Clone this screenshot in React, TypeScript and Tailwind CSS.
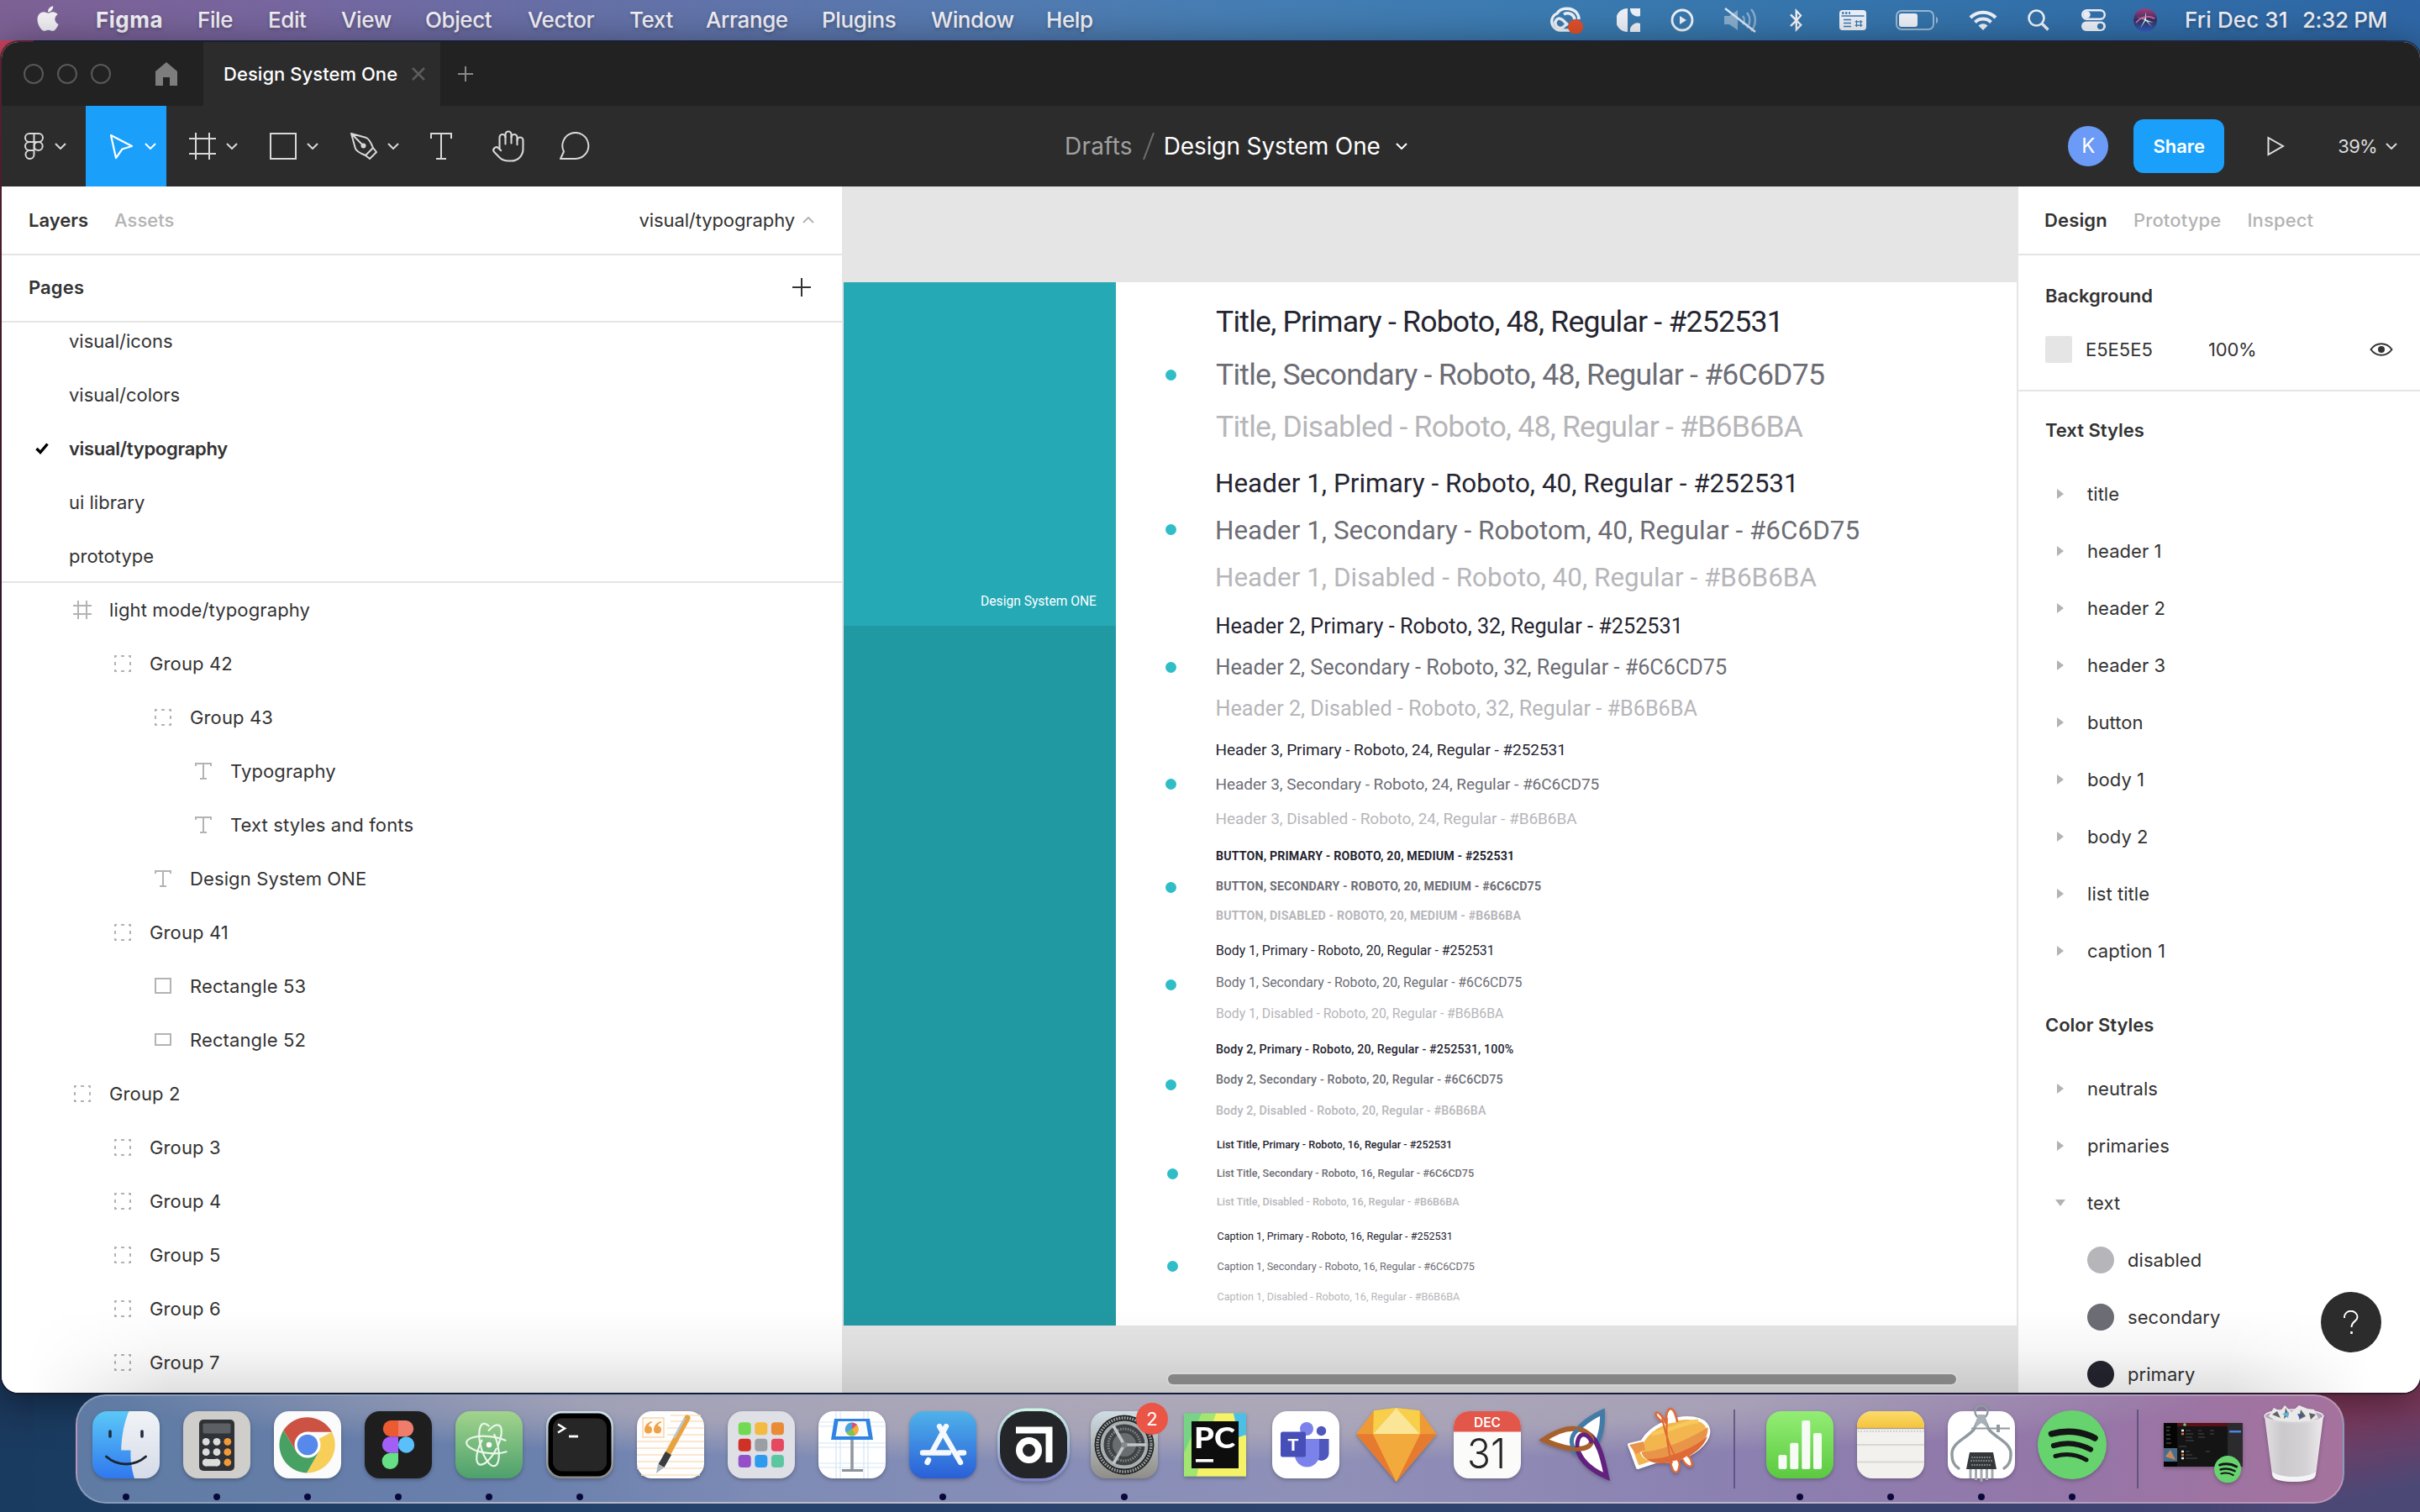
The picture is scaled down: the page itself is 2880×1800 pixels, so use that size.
import type { ReactNode } from "react";
import { FaApple, FaBluetoothB } from "react-icons/fa";
import { Hand } from "lucide-react";

/* ---------- menu bar ---------- */

const menus: [string, string][] = [
  ["File", "w-[84px]"],
  ["Edit", "w-[87px]"],
  ["View", "w-[100px]"],
  ["Object", "w-[122px]"],
  ["Vector", "w-[121px]"],
  ["Text", "w-[91px]"],
  ["Arrange", "w-[138px]"],
  ["Plugins", "w-[130px]"],
  ["Window", "w-[137px]"],
  ["Help", "w-[80px]"],
];

function MenuBar() {
  return (
    <div className="relative flex h-12 shrink-0 items-center bg-[linear-gradient(90deg,#7d6195_0%,#7767a0_12%,#686fa6_22%,#5a78ae_36%,#477eb4_50%,#3b7bb1_64%,#3473ab_80%,#2f67a6_100%)] text-[26px] font-medium leading-none tracking-[-0.4px] text-[#f3f1f6] [text-shadow:0_2px_4px_rgba(0,0,0,0.25)]">
      <FaApple className="ml-[42px] -mt-1 h-[34px] w-[30px]" />
      <span className="ml-[42px] w-[121px] font-bold tracking-[0.5px]">Figma</span>
      {menus.map(([m, w]) => (
        <span key={m} className={w}>
          {m}
        </span>
      ))}
      <div className="ml-auto mr-[41px] flex items-center">
        <svg className="h-8 w-10" viewBox="0 0 40 32" fill="none" stroke="#eef2f8" strokeWidth="3.5">
          <path d="M27 28H12A10.500 10.500 0 0 1 9 8C12 3 18 1.500 24 2.500C31 4 35 9 35 15" />
          <path d="M20 21L16 24.500A6 6 0 0 1 8 16C10 13 13 13.500 16 16L22 22M17 9C23 6 29 9 30 15" />
          <circle cx="31" cy="24" r="9" fill="#e2502a" stroke="none" />
        </svg>
        <svg className="ml-10 h-7 w-7" viewBox="0 0 28 28" fill="#eef2f8">
          <path d="M13 0V28A14 14 0 0 1 13 0ZM16 0H28V9A9 9 0 0 1 16 0ZM16 28A9 9 0 0 1 28 18V28Z" />
        </svg>
        <svg className="ml-9 h-7 w-7" viewBox="0 0 28 28" fill="none" stroke="#eef2f8" strokeWidth="2.800">
          <circle cx="14" cy="14" r="12" />
          <path d="M11 9L19 14L11 19Z" fill="#eef2f8" stroke="none" />
        </svg>
        <svg className="ml-[35px] h-8 w-10" viewBox="0 0 40 32" fill="none">
          <g opacity="0.4">
            <path d="M1 11H7L17 4V28L7 21H1Z" fill="#fff" />
            <path d="M23 11A8 8 0 0 1 23 21M28 7A14 14 0 0 1 28 25M33 3A20 20 0 0 1 33 29" stroke="#fff" strokeWidth="2.500" />
          </g>
          <path d="M2 2L38 30" stroke="#dfe8f3" strokeWidth="2.500" />
        </svg>
        <FaBluetoothB className="ml-[36px] h-7 w-[21px]" />
        <svg className="ml-[41px] h-6 w-8" viewBox="0 0 32 24">
          <rect x="0" y="0" width="32" height="24" rx="4" fill="#eef2f8" />
          <path d="M3 3.500H13" stroke="#3a78af" strokeWidth="2.500" strokeDasharray="2.500 1.500" />
          <path d="M2.500 7H29.500M5 11.500H14M5 15.500H14M5 19.500H14" stroke="#3a78af" strokeWidth="1.500" />
          <path d="M20.500 12V20M25.500 12V20M18.500 13.800H27.500M18.500 18.200H27.500" stroke="#3a78af" strokeWidth="1.200" />
        </svg>
        <svg className="ml-[35px] h-6 w-[51px]" viewBox="0 0 51 24">
          <rect x="1" y="1" width="44" height="22" rx="6" fill="none" stroke="#fff" strokeOpacity="0.5" strokeWidth="2" />
          <rect x="4" y="4" width="22" height="16" rx="3" fill="#eef2f8" />
          <path d="M48 8C51 9 51 15 48 16Z" fill="#fff" fillOpacity="0.5" />
        </svg>
        <svg className="ml-9 h-6 w-[34px]" viewBox="0 0 34 24" fill="none" stroke="#eef2f8" strokeWidth="4">
          <path d="M2 9A21 21 0 0 1 32 9M7.500 14.500A13.500 13.500 0 0 1 26.500 14.500" />
          <path d="M17 24L11.500 18.500A8 8 0 0 1 22.500 18.500Z" fill="#eef2f8" stroke="none" />
        </svg>
        <svg className="ml-9 h-[26px] w-[26px]" viewBox="0 0 26 26" fill="none" stroke="#eef2f8" strokeWidth="2.600">
          <circle cx="10.500" cy="10.500" r="9" />
          <path d="M17 17L24.500 24.500" strokeWidth="3.400" />
        </svg>
        <svg className="ml-[38px] h-[26px] w-[29px]" viewBox="0 0 29 26">
          <rect x="1.200" y="1.200" width="26.600" height="10.500" rx="5.250" fill="none" stroke="#eef2f8" strokeWidth="2.400" />
          <circle cx="6.500" cy="6.500" r="4.200" fill="#eef2f8" />
          <rect x="0" y="14.500" width="29" height="11.500" rx="5.750" fill="#eef2f8" />
          <circle cx="22.500" cy="20.300" r="3.600" fill="#3671aa" />
        </svg>
        <svg className="ml-[33px] h-7 w-7" viewBox="0 0 28 28">
          <defs>
            <linearGradient id="siri" x1="0" y1="0" x2="0" y2="1">
              <stop offset="0" stopColor="#a83e7e" />
              <stop offset="0.5" stopColor="#34305f" />
              <stop offset="1" stopColor="#3163c4" />
            </linearGradient>
          </defs>
          <circle cx="14" cy="14" r="14" fill="url(#siri)" />
          <path d="M4 10L14 13L24 17L14 15L8 24L13 14L15 4L15 13L22 22L14 14Z" fill="#d9fff4" />
          <path d="M3 17C9 10 17 8 25 12" stroke="#e76aa8" strokeWidth="1.500" fill="none" />
        </svg>
        <span className="ml-[33px] w-[140px] tracking-[0.1px]">Fri Dec 31</span>
        <span className="w-[99px] whitespace-nowrap">2:32 PM</span>
      </div>
    </div>
  );
}

/* ---------- window chrome ---------- */

function Chevron({ up, color = "#d8d8d8" }: { up?: boolean; color?: string }) {
  return (
    <svg className="h-2 w-[14px] shrink-0" viewBox="0 0 14 8" fill="none" stroke={color} strokeWidth="2">
      <path d={up ? "M1 7L7 1L13 7" : "M1 1L7 7L13 1"} />
    </svg>
  );
}

function TabBar() {
  return (
    <div className="flex h-[76px] shrink-0 items-center bg-[#222222]">
      <div className="ml-[26px] flex gap-4">
        <i className="size-6 rounded-full border-2 border-[#585858]" />
        <i className="size-6 rounded-full border-2 border-[#585858]" />
        <i className="size-6 rounded-full border-2 border-[#585858]" />
      </div>
      <svg className="ml-[53px] h-7 w-[26px]" viewBox="0 0 26 28" fill="#7d7d7d">
        <path d="M13 0L26 11V28H17V18H9V28H0V11Z" />
      </svg>
      <div className="ml-[31px] flex h-full w-[282px] items-center bg-[#2c2c2c] pl-6">
        <span className="text-[22px] font-medium tracking-[0.05px] text-white">Design System One</span>
        <svg className="ml-[17px] size-4" viewBox="0 0 16 16" stroke="#5c5c5c" strokeWidth="2.500">
          <path d="M1 1L15 15M15 1L1 15" />
        </svg>
      </div>
      <svg className="ml-[21px] size-[18px]" viewBox="0 0 18 18" stroke="#8a8a8a" strokeWidth="2">
        <path d="M9 0V18M0 9H18" />
      </svg>
    </div>
  );
}

function Tool({ children, active }: { children: ReactNode; active?: boolean }) {
  return (
    <div className={active ? "flex h-full w-24 items-center bg-[#1aa0fb] pl-[28px]" : "flex h-full w-24 items-center pl-[27px]"}>
      {children}
      <span className="ml-3">
        <Chevron color={active ? "#ffffff" : "#d8d8d8"} />
      </span>
    </div>
  );
}

function Toolbar() {
  return (
    <div className="flex h-24 shrink-0 items-center bg-[#2c2c2c] text-[28px] leading-none">
      <div className="flex h-full w-[1265px] items-center">
        <div className="flex h-full w-[100px] items-center pl-[27px]">
          <svg className="h-8 w-[23px]" viewBox="0 0 23 32" fill="none" stroke="#d8d8d8" strokeWidth="2">
            <path d="M11.500 1H6A5 5 0 0 0 6 11H11.500ZM11.500 1H17A5 5 0 0 1 17 11H11.500ZM11.500 11H6A5 5 0 0 0 6 21H11.500ZM11.500 21H6A5 5 0 1 0 11.500 26Z" />
            <circle cx="16.700" cy="16" r="5" />
          </svg>
          <span className="ml-[13px]">
            <Chevron />
          </span>
        </div>
        <Tool active>
          <svg className="h-8 w-[30px]" viewBox="0 0 30 32" fill="none" stroke="#fff" strokeWidth="2.200" strokeLinejoin="round">
            <path d="M2 3L27 16L15.500 19.500L8 30Z" />
          </svg>
        </Tool>
        <Tool>
          <svg className="size-8" viewBox="0 0 32 32" stroke="#d8d8d8" strokeWidth="2">
            <path d="M8 0V32M24 0V32M0 7H32M0 25H32" />
          </svg>
        </Tool>
        <Tool>
          <svg className="size-8" viewBox="0 0 32 32" fill="none" stroke="#d8d8d8" strokeWidth="2">
            <rect x="1" y="1" width="30" height="30" />
          </svg>
        </Tool>
        <Tool>
          <svg className="size-8" viewBox="0 0 32 32" fill="none" stroke="#d8d8d8" strokeWidth="2" strokeLinejoin="round">
            <path d="M1 1L19 6C24 9 25 14 27 18L18 27C14 25 9 24 6 19ZM1 1L14 14M27 18L31 23L23 31L18 27" />
            <circle cx="15.500" cy="15.500" r="3" fill="#d8d8d8" stroke="none" />
          </svg>
        </Tool>
        <svg className="ml-[26px] h-8 w-[26px]" viewBox="0 0 26 32" fill="none" stroke="#d8d8d8" strokeWidth="2">
          <path d="M1 7V1H25V7M13 1V31M7 31H19" />
        </svg>
        <Hand className="ml-[46px] size-[42px] text-[#d8d8d8]" strokeWidth={1.2} />
        <svg className="ml-[39px] h-[34px] w-[37px]" viewBox="0 0 37 34" fill="none" stroke="#d8d8d8" strokeWidth="2" strokeLinejoin="round">
          <path d="M20 32A15.500 15.500 0 1 0 6 23.500L2 32Z" />
        </svg>
      </div>
      <span className="tracking-[0.2px] text-[#a0a0a0]">Drafts</span>
      <svg className="ml-[12px] h-8 w-[14px]" viewBox="0 0 14 32" stroke="#6e6e6e" strokeWidth="2">
        <path d="M13 0L1 32" />
      </svg>
      <span className="ml-[11px] tracking-[-0.120px] text-white">Design System One</span>
      <span className="ml-[18px]">
        <Chevron color="#fff" />
      </span>
      <div className="ml-auto flex items-center">
        <span className="flex size-12 items-center justify-center rounded-full bg-[#6b9bf7] text-[24px] text-white">K</span>
        <span className="ml-[30px] flex h-16 w-[108px] items-center justify-center rounded-xl bg-[#1aa0fb] text-[22px] font-semibold text-white">
          Share
        </span>
        <svg className="ml-[51px] h-6 w-[21px]" viewBox="0 0 21 24" fill="none" stroke="#e0e0e0" strokeWidth="2">
          <path d="M1.500 2L19 12L1.500 22Z" />
        </svg>
        <span className="ml-[63px] text-[22px] tracking-[-0.700px] text-[#dcdcdc]">39%</span>
        <span className="ml-[10px] mr-[27px]">
          <Chevron />
        </span>
      </div>
    </div>
  );
}

/* ---------- left panel ---------- */

type LayerKind = "frame" | "group" | "text" | "square" | "wide";

function LayerIcon({ kind }: { kind: LayerKind }) {
  return (
    <svg className="size-6 shrink-0" viewBox="0 0 24 24" fill="none" stroke="#b3b3b3" strokeWidth="2">
      {kind === "frame" && <path d="M7 1V23M17 1V23M1 7H23M1 17H23" />}
      {kind === "group" && (
        <path d="M3 5V3H5M19 3H21V5M21 19V21H19M5 21H3V19M10 3H14M10 21H14M3 10V14M21 10V14" />
      )}
      {kind === "text" && <path d="M3 6V3H21V6M12 3V21M8 21H16" />}
      {kind === "square" && <rect x="3" y="3" width="18" height="17" />}
      {kind === "wide" && <rect x="3" y="5" width="18" height="13" />}
    </svg>
  );
}

const layers: [string, LayerKind, string][] = [
  ["light mode/typography", "frame", "pl-[84px]"],
  ["Group 42", "group", "pl-[132px]"],
  ["Group 43", "group", "pl-[180px]"],
  ["Typography", "text", "pl-[228px]"],
  ["Text styles and fonts", "text", "pl-[228px]"],
  ["Design System ONE", "text", "pl-[180px]"],
  ["Group 41", "group", "pl-[132px]"],
  ["Rectangle 53", "square", "pl-[180px]"],
  ["Rectangle 52", "wide", "pl-[180px]"],
  ["Group 2", "group", "pl-[84px]"],
  ["Group 3", "group", "pl-[132px]"],
  ["Group 4", "group", "pl-[132px]"],
  ["Group 5", "group", "pl-[132px]"],
  ["Group 6", "group", "pl-[132px]"],
  ["Group 7", "group", "pl-[132px]"],
];

const pages = ["visual/icons", "visual/colors", "visual/typography", "ui library", "prototype"];

function LeftPanel() {
  return (
    <aside className="flex w-[1002px] shrink-0 flex-col border-r-2 border-[#e5e5e5] bg-white text-[22px] leading-none tracking-[0.120px] text-[#333333]">
      <div className="flex h-[82px] shrink-0 items-center border-b-2 border-[#e5e5e5] pl-8 pr-[33px]">
        <span className="font-semibold tracking-normal">Layers</span>
        <span className="ml-[31px] font-medium tracking-normal text-[#b3b3b3]">Assets</span>
        <span className="ml-auto mr-[9px] tracking-[-0.1px]">visual/typography</span>
        <Chevron up color="#b3b3b3" />
      </div>
      <div className="flex h-20 shrink-0 items-center justify-between border-b-2 border-[#e5e5e5] pb-[2px] pl-8 pr-[37px]">
        <span className="font-semibold">Pages</span>
        <svg className="size-[22px]" viewBox="0 0 22 22" stroke="#333" strokeWidth="2">
          <path d="M11 0V22M0 11H22" />
        </svg>
      </div>
      <div className="h-[310px] shrink-0 overflow-hidden border-b-2 border-[#e5e5e5]">
        <ul className="-mt-[10px]">
          {pages.map((p) => (
            <li key={p} className="flex h-16 items-center pl-10">
              <span className="w-10">
                {p === "visual/typography" && (
                  <svg className="h-[14px] w-4" viewBox="0 0 16 14" fill="none" stroke="#000" strokeWidth="3.400">
                    <path d="M1.500 7L6 11.500L14.500 1.500" />
                  </svg>
                )}
              </span>
              <span className={p === "visual/typography" ? "font-semibold tracking-[-0.3px]" : "tracking-normal"}>{p}</span>
            </li>
          ))}
        </ul>
      </div>
      <ul>
        {layers.map(([name, kind, pad]) => (
          <li key={name} className="flex h-16 items-center">
            <div className={pad}>
              <div className="flex items-center gap-5">
                <LayerIcon kind={kind} />
                <span>{name}</span>
              </div>
            </div>
          </li>
        ))}
      </ul>
    </aside>
  );
}

/* ---------- canvas ---------- */

const PRIMARY = "text-[#252531]";
const SECONDARY = "text-[#6c6d75]";
const DISABLED = "text-[#b6b6ba]";

interface Sample {
  style: string;
  size: number;
  x: number;
  baselines: number[];
  dot: number;
  lines: string[];
}

/* Coordinates are measured from the artboard's top-left corner. */
const samples: Sample[] = [
  { style: "text-[35.600px] tracking-[-0.780px]", size: 35.6, x: 443, baselines: [59, 121.7, 184.5], dot: 110.5, lines: ["Title, Primary - Roboto, 48, Regular - #252531", "Title, Secondary - Roboto, 48, Regular - #6C6D75", "Title, Disabled - Roboto, 48, Regular - #B6B6BA"] },
  { style: "text-[31.400px] tracking-[0.040px]", size: 31.4, x: 442, baselines: [250.8, 306.5, 362.3], dot: 294.5, lines: ["Header 1, Primary - Roboto, 40, Regular - #252531", "Header 1, Secondary - Robotom, 40, Regular - #6C6D75", "Header 1, Disabled - Roboto, 40, Regular - #B6B6BA"] },
  { style: "text-[25.200px] tracking-[0.010px]", size: 25.2, x: 442.5, baselines: [419, 468, 516.8], dot: 458.3, lines: ["Header 2, Primary - Roboto, 32, Regular - #252531", "Header 2, Secondary - Roboto, 32, Regular - #6C6CD75", "Header 2, Disabled - Roboto, 32, Regular - #B6B6BA"] },
  { style: "text-[19px] tracking-[-0.040px]", size: 19, x: 442.5, baselines: [563.5, 604.7, 645.3], dot: 597.5, lines: ["Header 3, Primary - Roboto, 24, Regular - #252531", "Header 3, Secondary - Roboto, 24, Regular - #6C6CD75", "Header 3, Disabled - Roboto, 24, Regular - #B6B6BA"] },
  { style: "text-[14.200px] font-bold tracking-[0.160px]", size: 14.2, x: 443, baselines: [688.3, 723.8, 759.2], dot: 720.5, lines: ["BUTTON, PRIMARY - ROBOTO, 20, MEDIUM - #252531", "BUTTON, SECONDARY - ROBOTO, 20, MEDIUM - #6C6CD75", "BUTTON, DISABLED - ROBOTO, 20, MEDIUM - #B6B6BA"] },
  { style: "text-[15.800px] tracking-[-0.030px]", size: 15.8, x: 443, baselines: [801.8, 839, 876.2], dot: 836, lines: ["Body 1, Primary - Roboto, 20, Regular - #252531", "Body 1, Secondary - Roboto, 20, Regular - #6C6CD75", "Body 1, Disabled - Roboto, 20, Regular - #B6B6BA"] },
  { style: "text-[14.200px] font-medium tracking-[0.160px]", size: 14.2, x: 443, baselines: [918.3, 954.2, 990.4], dot: 955.5, lines: ["Body 2, Primary - Roboto, 20, Regular - #252531, 100%", "Body 2, Secondary - Roboto, 20, Regular - #6C6CD75", "Body 2, Disabled - Roboto, 20, Regular - #B6B6BA"] },
  { style: "text-[12.600px] font-medium", size: 12.6, x: 444, baselines: [1031.3, 1065, 1099.3], dot: 1061.5, lines: ["List Title, Primary - Roboto, 16, Regular - #252531", "List Title, Secondary - Roboto, 16, Regular - #6C6CD75", "List Title, Disabled - Roboto, 16, Regular - #B6B6BA"] },
  { style: "text-[12.600px] tracking-[-0.010px]", size: 12.6, x: 444.5, baselines: [1140, 1176, 1212.2], dot: 1171.8, lines: ["Caption 1, Primary - Roboto, 16, Regular - #252531", "Caption 1, Secondary - Roboto, 16, Regular - #6C6CD75", "Caption 1, Disabled - Roboto, 16, Regular - #B6B6BA"] },
];

const tones = [PRIMARY, SECONDARY, DISABLED];

function Canvas() {
  return (
    <main className="relative min-w-0 flex-1 overflow-hidden bg-[#e5e5e5] font-['Roboto',sans-serif]">
      <div className="absolute left-0 top-[114px] h-[1242px] w-full bg-white">
        <div className="flex h-full w-[324px] flex-col">
          <div className="flex h-[409px] items-end justify-end bg-[#25a9b5] pb-5 pr-[23px] text-[15.600px] leading-none text-white">
            Design System ONE
          </div>
          <div className="flex-1 bg-[#2199a3]" />
        </div>
        {samples.map((s) => (
          <div key={s.lines[0]}>
            <i
              className="absolute size-[13px] rounded-full bg-[#2fbdc7]"
              style={{ top: s.dot - 6.5, left: s.x >= 444 ? 384.5 : 382.5 }}
            />
            {s.lines.map((line, i) => (
              <p
                key={line}
                className={`absolute whitespace-nowrap leading-[40px] ${s.style} ${tones[i]}`}
                style={{ left: s.x, top: s.baselines[i] - 20 - 0.342 * s.size }}
              >
                {line}
              </p>
            ))}
          </div>
        ))}
      </div>
      <div className="absolute bottom-[10px] left-[386px] h-3 w-[938px] rounded-full bg-[#939393] shadow-[0_0_0_2px_rgba(255,255,255,0.3)]" />
    </main>
  );
}

/* ---------- right panel ---------- */

const textStyles = ["title", "header 1", "header 2", "header 3", "button", "body 1", "body 2", "list title", "caption 1"];

function StyleRow({ name, open }: { name: string; open?: boolean }) {
  return (
    <li className="flex h-[68px] items-center pl-[44px]">
      <span className="flex w-[38px]">
        {open ? (
          <svg className="h-2 w-3" viewBox="0 0 12 8" fill="#b3b3b3">
            <path d="M0 0H12L6 8Z" />
          </svg>
        ) : (
          <svg className="ml-[2px] h-3 w-2" viewBox="0 0 8 12" fill="#b3b3b3">
            <path d="M0 0V12L8 6Z" />
          </svg>
        )}
      </span>
      {name}
    </li>
  );
}

function ColorRow({ name, swatch }: { name: string; swatch: string }) {
  return (
    <li className="flex h-[68px] items-center gap-4 pl-[82px]">
      <i className={`size-8 rounded-full ${swatch}`} />
      {name}
    </li>
  );
}

function RightPanel() {
  return (
    <aside className="flex w-[480px] shrink-0 flex-col overflow-hidden border-l-2 border-[#e5e5e5] bg-white text-[22px] leading-none tracking-[0.050px] text-[#333333]">
      <div className="flex h-[82px] shrink-0 items-center border-b-2 border-[#e5e5e5] pl-[31px] font-medium tracking-[0.150px] text-[#b3b3b3]">
        <span className="font-semibold text-[#333333]">Design</span>
        <span className="ml-[31px]">Prototype</span>
        <span className="ml-[31px]">Inspect</span>
      </div>
      <div className="flex h-[162px] shrink-0 flex-col border-b-2 border-[#e5e5e5] pl-8 pr-[32px]">
        <h3 className="flex h-24 items-center font-semibold tracking-normal">Background</h3>
        <div className="flex h-8 items-center">
          <i className="size-8 rounded-[2px] bg-[#e5e5e5]" />
          <span className="ml-4 w-[146px] tracking-normal">E5E5E5</span>
          <span className="tracking-[-0.200px]">100%</span>
          <svg className="ml-auto h-4 w-[28px]" viewBox="0 0 28 16" fill="none" stroke="#333" strokeWidth="2">
            <path d="M1.500 8C8 -1 20 -1 26.500 8C20 17 8 17 1.500 8Z" />
            <circle cx="14" cy="8" r="4" fill="#333" stroke="none" />
          </svg>
        </div>
      </div>
      <h3 className="flex h-[88px] shrink-0 items-center pl-8 pt-[4px] font-semibold tracking-normal">Text Styles</h3>
      <ul>
        {textStyles.map((s) => (
          <StyleRow key={s} name={s} />
        ))}
      </ul>
      <h3 className="flex h-[96px] shrink-0 items-center pl-8 pt-[12px] font-semibold tracking-normal">Color Styles</h3>
      <ul>
        <StyleRow name="neutrals" />
        <StyleRow name="primaries" />
        <StyleRow name="text" open />
        <ColorRow name="disabled" swatch="bg-[#b6b6ba]" />
        <ColorRow name="secondary" swatch="bg-[#6c6d75]" />
        <ColorRow name="primary" swatch="bg-[#252531]" />
      </ul>
    </aside>
  );
}

/* ---------- dock ---------- */

function App80({ children, dot, badge }: { children: ReactNode; dot?: boolean; badge?: string }) {
  return (
    <div className="relative flex w-[108px] flex-col items-center pt-[18px]">
      <svg className="size-20 overflow-visible drop-shadow-[0_2px_2px_rgba(0,0,0,0.25)]" viewBox="0 0 80 80">
        {children}
      </svg>
      {dot && <i className="mt-[18px] size-2 rounded-full bg-[#0a0838]" />}
      {badge && (
        <span className="absolute right-[2px] top-2 flex size-[38px] items-center justify-center rounded-full bg-[#ea5545] text-[22px] leading-none text-white">
          {badge}
        </span>
      )}
    </div>
  );
}

function Tile({ fill }: { fill: string }) {
  return <rect width="80" height="80" rx="18" fill={fill} />;
}

function Grad({ id, stops }: { id: string; stops: string[] }) {
  return (
    <linearGradient id={id} x1="0" y1="0" x2="0" y2="1">
      {stops.map((c, i) => (
        <stop key={i} offset={i / (stops.length - 1)} stopColor={c} />
      ))}
    </linearGradient>
  );
}

function SpotifyArcs() {
  return (
    <g fill="none" stroke="#131614" strokeLinecap="round">
      <path d="M15.500 27C32 22 52 23.500 67 32" strokeWidth="7.500" />
      <path d="M18 41C32 36.500 48 38 62 45.500" strokeWidth="6.200" />
      <path d="M20 53.500C32 50 45 51 57 58" strokeWidth="5" />
    </g>
  );
}

function Divider() {
  return (
    <div className="flex w-12 justify-center pt-4">
      <i className="h-[94px] w-[2px] bg-[#4b4175]/70" />
    </div>
  );
}

const launchpadColors = ["#72da52", "#f3bb41", "#e98b34", "#cf3127", "#9a9fa3", "#e5485f", "#9350c9", "#2f9bee", "#5cc6a0"];

function Dock() {
  return (
    <div className="absolute left-[90px] top-[1660px] flex h-[130px] w-[2700px] rounded-[36px] border-2 border-white/25 bg-[radial-gradient(ellipse_75%_100%_at_48%_0%,rgba(176,170,184,0.95)_0%,rgba(176,170,184,0.75)_35%,rgba(176,170,184,0)_62%),linear-gradient(90deg,#5f7ba3_0%,#6a80ad_20%,#7d8bb5_30%,#8f90b8_55%,#8b7fb0_75%,#9576a8_88%,#a5729d_100%)] px-1">
      <App80 dot>
        <defs>
          <Grad id="fin" stops={["#5bc8f7", "#3078ee"]} />
          <Grad id="finr" stops={["#f1f3f6", "#d5dbe8"]} />
          <clipPath id="tile">
            <rect width="80" height="80" rx="18" />
          </clipPath>
        </defs>
        <g clipPath="url(#tile)">
          <rect width="80" height="80" fill="url(#fin)" />
          <path d="M43.500 0C38 12 34.500 30 34.200 46.500H45.500C45 60 47 70 50 80H80V0Z" fill="url(#finr)" />
        </g>
        <path d="M21 24V30M59 24V30" stroke="#222b3a" strokeWidth="3.600" strokeLinecap="round" />
        <path d="M16.500 54C30 66 50 66 63.500 54" stroke="#1c2430" strokeWidth="3" strokeLinecap="round" fill="none" />
      </App80>
      <App80 dot>
        <Tile fill="#cfceca" />
        <rect x="19" y="10" width="42" height="61" rx="5" fill="#2f3236" />
        <rect x="23.500" y="14.500" width="33" height="12" rx="2" fill="#5c6065" />
        {[36.3, 48.7, 61].map((y) =>
          [27.2, 40, 52.8].map((x) => <circle key={`${x}-${y}`} cx={x} cy={y} r="4.400" fill={x > 50 ? "#f29a38" : "#dcdcda"} />)
        )}
        <rect x="23" y="57" width="21" height="8.500" rx="4.200" fill="#dcdcda" />
      </App80>
      <App80 dot>
        <Tile fill="#fbfbfb" />
        <path d="M40 40L69 24.700A33.500 33.500 0 0 1 39 73.500L53.500 48Z" fill="#f7ce57" />
        <path d="M40 40L53.500 48L39 73.500A33.500 33.500 0 0 1 11.400 22.500L26.500 48Z" fill="#46a163" />
        <path d="M40 24.700H69A33.500 33.500 0 0 0 11.400 22.500L26.500 48Z" fill="#cc5244" />
        <circle cx="40" cy="40" r="15.500" fill="#fff" />
        <circle cx="40" cy="40" r="12.300" fill="#5789ec" />
      </App80>
      <App80 dot>
        <Tile fill="#1e1e1f" />
        <path d="M40 11H30.500A9.700 9.700 0 0 0 30.500 30.300H40Z" fill="#ec5a31" />
        <path d="M40 11H49.500A9.700 9.700 0 0 1 49.500 30.300H40Z" fill="#ee7d6b" />
        <path d="M40 30.300H30.500A9.700 9.700 0 0 0 30.500 49.700H40Z" fill="#a25ff6" />
        <circle cx="49.500" cy="40" r="9.700" fill="#5bbffa" />
        <path d="M40 49.700H30.500A9.700 9.700 0 1 0 40 59.400Z" fill="#66e085" />
      </App80>
      <App80 dot>
        <defs>
          <Grad id="atm" stops={["#a2d48d", "#4da06c"]} />
        </defs>
        <Tile fill="url(#atm)" />
        <g fill="none" stroke="#e9f7ea" strokeWidth="2.200" strokeLinecap="round">
          <ellipse cx="40" cy="40" rx="10" ry="26" transform="rotate(-15 40 40)" strokeDasharray="96 12" />
          <ellipse cx="40" cy="40" rx="10" ry="26" transform="rotate(27 40 40)" strokeDasharray="60 14 40 8" />
          <ellipse cx="40" cy="40" rx="10" ry="27" transform="rotate(96 40 40)" strokeDasharray="80 20" />
        </g>
        <circle cx="40" cy="40" r="3.200" fill="#fff" />
      </App80>
      <App80 dot>
        <defs>
          <Grad id="trm" stops={["#cfe3ee", "#8a8784"]} />
        </defs>
        <Tile fill="url(#trm)" />
        <rect x="2.500" y="2.500" width="75" height="75" rx="16" fill="#000" />
        <rect x="8" y="8.500" width="64" height="63" rx="11" fill="#262627" />
        <path d="M14 15.500L22 20.500L14 25.500" stroke="#fff" strokeWidth="2.600" fill="none" />
        <path d="M27 30H38" stroke="#fff" strokeWidth="2.800" />
      </App80>
      <App80>
        <Tile fill="#fefefe" />
        <path d="M40 5H76M40 12H79M36 20H80M36 28H80M0 36H80M0 44H80M0 52H80M0 60H80M0 68H79M5 76H75" stroke="#fbe0c0" strokeWidth="1.500" />
        <rect x="7" y="8" width="25" height="23" fill="#fffaf3" stroke="#f3c58b" />
        <path d="M18 12C12 13 9 18 9 22A4.500 4.500 0 1 0 14 17.500C14 15.500 16 14 18 13.500ZM29 12C23 13 20 18 20 22A4.500 4.500 0 1 0 25 17.500C25 15.500 27 14 29 13.500Z" fill="#eda24a" />
        <path d="M60 8L36 52" stroke="#e8a33e" strokeWidth="7" strokeLinecap="round" />
        <path d="M57 8L44 32" stroke="#b7c7d8" strokeWidth="2.500" />
        <path d="M37.500 50L29 65" stroke="#3b3b3d" strokeWidth="8" />
        <path d="M25 63L32 67L23 74Z" fill="#a8b3bd" />
      </App80>
      <App80>
        <Tile fill="#dfdfe6" />
        {launchpadColors.map((c, i) => (
          <rect key={c} x={12.7 + (i % 3) * 19.6} y={13.3 + Math.floor(i / 3) * 19.4} width="15" height="15" rx="4" fill={c} />
        ))}
      </App80>
      <App80>
        <Tile fill="#fff" />
        <path d="M21 0V80M26 0V80M54 0V80M59 0V80M2 13H78M0 18H80M0 38H80M0 43H80M0 62H80M2 67H78" stroke="#d5e6f5" strokeWidth="1.200" />
        <path d="M40 34V72" stroke="#9097a0" strokeWidth="3.600" />
        <rect x="28" y="69" width="25" height="3" fill="#8d9399" />
        <path d="M19 9H61L65 34H15Z" fill="#2f83e3" />
        <path d="M23.500 12H56.500L59.500 30H20.500Z" fill="#f7fafd" />
        <circle cx="40" cy="21.500" r="8" fill="#f3ae3d" />
        <path d="M40 21.500V13.500A8 8 0 0 0 33 25.500Z" fill="#4aa3e0" />
        <path d="M40 21.500L33 25.500A8 8 0 0 0 44 28.500Z" fill="#7cc35a" />
        <path d="M40 21.500V13.500A8 8 0 0 1 46 16Z" fill="#d95077" />
      </App80>
      <App80 dot>
        <defs>
          <Grad id="aps" stops={["#4fb2ea", "#2a5fd8"]} />
        </defs>
        <Tile fill="url(#aps)" />
        <g stroke="#f5f9ff" strokeWidth="6.400" strokeLinecap="round">
          <path d="M44 18L28 47M36 18L61 61M16 49.500H47M60 49.500H65M23 58L21.500 61" />
        </g>
      </App80>
      <App80>
        <defs>
          <Grad id="abs" stops={["#cdf5e6", "#7f84cc"]} />
        </defs>
        <rect x="-3" y="-3.500" width="86" height="87" rx="34" fill="url(#abs)" />
        <rect x="0" y="0" width="80" height="80" rx="31" fill="#242529" />
        <path d="M19 18.500H62.500V61H54.500V26.500H19Z" fill="#fff" />
        <circle cx="34.500" cy="46.500" r="11.500" fill="none" stroke="#fff" strokeWidth="8" />
      </App80>
      <App80 dot badge="2">
        <defs>
          <Grad id="set" stops={["#cfdde4", "#8f8d88"]} />
        </defs>
        <Tile fill="url(#set)" />
        <circle cx="40" cy="40" r="35.500" fill="#242526" />
        <circle cx="40" cy="40" r="32" fill="none" stroke="#9b9fa2" strokeWidth="3.500" strokeDasharray="1.800 1.400" />
        <circle cx="40" cy="40" r="26.500" fill="#3f4143" stroke="#a9aeb1" strokeWidth="4" />
        <circle cx="40" cy="40" r="19" fill="none" stroke="#85898b" strokeWidth="3" strokeDasharray="1.500 1.500" />
        <circle cx="40" cy="40" r="14" fill="#6a6d70" />
        <path d="M40 40H66M40 40L27 17.500M40 40L27 62.500" stroke="#c1c6c9" strokeWidth="3.600" />
        <circle cx="40" cy="40" r="3.500" fill="#85898c" />
      </App80>
      <App80>
        <rect x="3" y="2.500" width="74" height="75" fill="#77d487" />
        <path d="M3 77.500V50L24 2.500H41L18 77.500Z" fill="#a2e570" />
        <path d="M41 2.500H62L77 30V77.500H18L22 60Z" fill="#f5f267" />
        <path d="M62 2.500H77V28L68 31Z" fill="#4cc0e4" />
        <rect x="12" y="12" width="56" height="56" fill="#0d0d0d" />
        <rect x="17" y="57" width="21" height="3.600" fill="#fff" />
        <text x="15" y="43.500" fontFamily="Lato, sans-serif" fontWeight="900" fontSize="34" textLength="49" lengthAdjust="spacingAndGlyphs" fill="#fff">
          PC
        </text>
      </App80>
      <App80>
        <Tile fill="#fff" />
        <circle cx="58.500" cy="23.500" r="5.700" fill="#4f57bd" />
        <path d="M52 33H67.500V50A9 9 0 0 1 52 56Z" fill="#4f57bd" />
        <circle cx="41" cy="21" r="8" fill="#7b83eb" />
        <path d="M27 33H56V52A14.500 14.500 0 0 1 27 52Z" fill="#7b83eb" />
        <rect x="10" y="24.500" width="30" height="30" rx="2.500" fill="#464eb8" />
        <text x="25" y="47" textAnchor="middle" fontFamily="Liberation Sans, sans-serif" fontWeight="700" fontSize="21" fill="#fff">
          T
        </text>
      </App80>
      <App80>
        <path d="M39.700 -4L13 -0.700L-8 27.300L39.700 84L87.500 27.300L67.500 -0.700Z" fill="#f1a33b" />
        <path d="M13 -0.700L-8 27.300H12Z" fill="#ee9a37" />
        <path d="M67.500 -0.700L87.500 27.300H68Z" fill="#ee9a37" />
        <path d="M13 -0.700L39.700 -4L12 27.300ZM67.500 -0.700L39.700 -4L68 27.300Z" fill="#f8cf48" />
        <path d="M39.700 -4L12 27.300H68Z" fill="#fbe596" />
        <path d="M-8 27.300H12L39.700 84ZM87.500 27.300H68L39.700 84Z" fill="#e67a2e" />
        <path d="M12 27.300H68L39.700 84Z" fill="#f3aa3c" />
      </App80>
      <App80>
        <g clipPath="url(#tile)">
          <rect width="80" height="80" fill="#fbfbfa" />
          <rect width="80" height="24.500" fill="#e3574b" />
        </g>
        <text x="40" y="19" textAnchor="middle" fontFamily="Inter, sans-serif" fontWeight="600" fontSize="15.500" fill="#fff">
          DEC
        </text>
        <text x="39" y="67.500" textAnchor="middle" fontFamily="Inter, sans-serif" fontWeight="300" fontSize="49" textLength="46" lengthAdjust="spacingAndGlyphs" fill="#262626">
          31
        </text>
      </App80>
      <App80>
        <g fill="#fff" strokeWidth="6" strokeLinejoin="miter">
          <path d="M69 1C70 22 64 44 52 48C38 54 30 48 33 35C38 18 54 8 69 1Z" stroke="#427ba8" />
          <path d="M74 78C70 58 64 30 49 26C37 25 35 38 41 50C47 63 60 72 74 78Z" stroke="#63217f" />
          <path d="M-1 34C20 20 34 18 46 23C58 29 59 37 52 42C42 48 20 44 -1 34Z" stroke="#a8612a" />
        </g>
        <path d="M39 43C38 26 50 22 57 38" stroke="#63217f" strokeWidth="5" fill="none" />
        <path d="M34 43C30 34 34 26 40 22" stroke="#427ba8" strokeWidth="5" fill="none" />
      </App80>
      <App80>
        <g stroke="#fff" strokeWidth="4" strokeLinejoin="round">
          <path d="M10 36L-7 40L3 67L24 60Z" fill="#f3b64e" />
          <ellipse cx="47" cy="34" rx="42" ry="23" transform="rotate(-20 47 34)" fill="#f3b64e" />
        </g>
        <path d="M10 36L-7 40L1 51L12 46Z" fill="#e8954a" />
        <path d="M7.500 48C24 50 64 34 86.500 19C88 40 60 60 34 62C18 62 8 56 7.500 48Z" fill="#e8954a" />
        <path d="M14 57C40 58 72 42 86 30C80 48 54 62 34 62C24 62 18 61 14 57Z" fill="#df6a35" />
        <path d="M20 27C40 24 60 12 75 12" stroke="#f7c85a" strokeWidth="5" fill="none" />
        <g fill="#fff" stroke="#df6a35" strokeWidth="2.500">
          <path d="M34 14C20 4 24 -2 30 4C34 8 36 12 37 15M37 15C36 -2 42 -8 47 2C49 8 50 10 50 13" />
          <path d="M42 60C44 74 50 76 52 68C54 62 52 60 51 58M56 57C62 68 70 68 67 60C66 56 64 54 62 53" />
        </g>
        <path d="M32 8C36 30 44 50 52 60M38 8C36 30 40 50 44 62" stroke="#df6a35" strokeWidth="2" fill="none" />
      </App80>
      <Divider />
      <App80 dot>
        <defs>
          <Grad id="num" stops={["#93ee74", "#5bc940"]} />
        </defs>
        <Tile fill="url(#num)" />
        <g fill="#f6fbf5">
          <rect x="14.500" y="52" width="10" height="17" rx="2" />
          <rect x="28.300" y="37.700" width="10" height="31.300" rx="2" />
          <rect x="42.300" y="11" width="10" height="58" rx="2" />
          <rect x="56" y="26" width="10" height="43" rx="2" />
        </g>
      </App80>
      <App80 dot>
        <defs>
          <Grad id="note" stops={["#fbdc6b", "#f5c33c"]} />
        </defs>
        <g clipPath="url(#tile)">
          <rect width="80" height="80" fill="#f3f1ee" />
          <rect width="80" height="20" fill="url(#note)" />
          <path d="M0 20.500H80" stroke="#a8a294" strokeWidth="1.500" />
          <path d="M1 24H80" stroke="#bdbab4" strokeWidth="1.500" strokeDasharray="1.500 2" />
          <path d="M0 40H80M0 60.500H80" stroke="#d9d7d4" strokeWidth="1.800" />
        </g>
      </App80>
      <App80 dot>
        <Tile fill="#fff" />
        <g fill="none" stroke="#8f9aa1">
          <circle cx="40" cy="0.700" r="7.500" strokeWidth="2.500" />
          <path d="M38 6L31 22C20 34 4 38 5 52C5 60 8 65 13 68M42 6L49 22C60 34 76 38 75 52C75 60 72 65 67 68" strokeWidth="3.400" strokeLinecap="round" />
          <path d="M28 20.500H74" strokeWidth="1.800" />
          <path d="M60 16V25" strokeWidth="4" />
        </g>
        <path d="M36 4H44L48 20L40 14L32 20Z" fill="#a7b1b7" />
        <path d="M26 49H54L58 69H22Z" fill="#35383b" />
        <path d="M28 55H52M27 59H53M28 64H52" stroke="#8c9194" strokeWidth="1.400" strokeDasharray="2 1" />
        <path d="M27 69V80M33.500 69V82M40 69V84M46.500 69V82M53 69V80" stroke="#a5a9ab" strokeWidth="3" />
      </App80>
      <App80 dot>
        <circle cx="40" cy="40" r="41" fill="#67d36f" />
        <SpotifyArcs />
      </App80>
      <Divider />
      <App80>
        <g transform="translate(-7 14)">
          <rect width="94" height="52" rx="1" fill="#141415" />
          <rect x="16" width="60" height="4" fill="#5a1016" />
          <rect width="16" height="52" fill="#050506" />
          <rect x="76" width="18" height="52" fill="#2b2b2d" />
          <rect x="78" y="9" width="14" height="2.500" fill="#4b83e6" />
          <rect y="30" width="16" height="16" fill="#4a6c8c" />
          <path d="M2 40L8 32L14 44Z" fill="#c58a5c" />
          <path d="M3 5H8M3 9H7M3 14H8M3 19H8M3 24H9" stroke="#666" strokeWidth="1" />
          <path d="M26 9H32M26 13H35M26 17H34M26 21H36M41 9H45M41 13H48M55 9H60M41 17H49M55 13H60M18 28H27M26 34H31M26 38H34M26 42H40M50 34H55" stroke="#555" strokeWidth="0.800" />
          <path d="M21 9H24M21 34H24M21 42H24" stroke="#eee" strokeWidth="2.500" />
          <path d="M21 13H24M21 38H24" stroke="#d9743a" strokeWidth="2.500" />
          <circle cx="25" cy="2" r="1.800" fill="#67d36f" />
        </g>
        <g transform="translate(53.500 53.500) scale(0.390)">
          <circle cx="40" cy="40" r="41" fill="#67d36f" />
          <SpotifyArcs />
        </g>
      </App80>
      <App80>
        <defs>
          <linearGradient id="trash" x1="0" y1="0" x2="1" y2="0">
            <stop offset="0" stopColor="#e6e4e8" />
            <stop offset="0.3" stopColor="#cfcdcf" />
            <stop offset="0.7" stopColor="#d8d6d8" />
            <stop offset="1" stopColor="#f2f0f3" />
          </linearGradient>
        </defs>
        <ellipse cx="40" cy="6" rx="35" ry="8" fill="#b9a6bc" stroke="#efeaf0" strokeWidth="1.500" />
        <path d="M10 6L16 -4L24 0L29 -7L37 1L46 -7L56 -3L64 -2L69 8L58 13H20Z" fill="#e9e9e9" />
        <path d="M14 4L20 0L24 8ZM30 -4L34 4L28 9ZM48 -2L54 6L46 10ZM58 2L66 4L60 10Z" fill="#5f6266" />
        <path d="M26 3L34 1L33 8Z" fill="#5db2d6" />
        <path d="M44 3L50 4L47 9Z" fill="#3b57a0" />
        <path d="M5 6C14 15 66 15 75 6L66 76C64 86 16 86 14 76Z" fill="url(#trash)" fillOpacity="0.960" />
        <path d="M14 72C24 80 56 80 66 72L65 78C62 86 18 86 15 78Z" fill="#f4f4f6" />
      </App80>
    </div>
  );
}

/* ---------- page ---------- */

export default function App() {
  return (
    <div className="relative flex h-[1800px] w-[2880px] flex-col overflow-hidden bg-[linear-gradient(90deg,#1a3b60_0%,#24426c_30%,#2d436d_60%,#3d4270_85%,#4c4876_100%)] font-['Inter',sans-serif]">
      <div className="absolute left-0 top-0 h-full w-10 bg-[linear-gradient(180deg,#c9445f_0%,#c9445f_8%,#93294a_30%,#5f2a55_55%,#1f3157_85%,#1a3b60_96%)]" />
      <div className="absolute bottom-0 right-0 h-[170px] w-[260px] bg-[linear-gradient(170deg,#8f3652_10%,#7b3a5e_40%,#4c4876_85%)] [mask-image:linear-gradient(90deg,transparent,black_50%)]" />
      <div className="absolute right-0 top-12 h-10 w-10 bg-[#2f67a6]" />
      <MenuBar />
      <div className="relative ml-[2px] mt-[2px] flex h-[1608px] flex-col overflow-hidden rounded-[20px] bg-white shadow-[0_0_0_2px_rgba(20,14,30,0.55),0_8px_50px_rgba(0,0,0,0.5)]">
        <TabBar />
        <Toolbar />
        <div className="flex min-h-0 flex-1">
          <LeftPanel />
          <Canvas />
          <RightPanel />
        </div>
        <div className="pointer-events-none absolute bottom-0 left-0 h-[100px] w-full bg-[linear-gradient(180deg,rgba(0,0,0,0)_0%,rgba(0,0,0,0.035)_50%,rgba(0,0,0,0.120)_100%)] [mask-image:linear-gradient(90deg,transparent_1%,black_7%,black_92%,transparent_98%)]" />
        <div className="absolute bottom-12 right-[46px] flex size-[72px] items-center justify-center rounded-full bg-[#2c2c2c]">
          <svg className="h-7 w-[18px]" viewBox="0 0 18 28" fill="none" stroke="#fff" strokeWidth="2">
            <path d="M1 9V8A7.500 7 0 0 1 16.500 8C16.500 13 9.500 13 9.500 20" />
            <path d="M9.500 25V28" strokeWidth="2.600" />
          </svg>
        </div>
      </div>
      <Dock />
    </div>
  );
}
